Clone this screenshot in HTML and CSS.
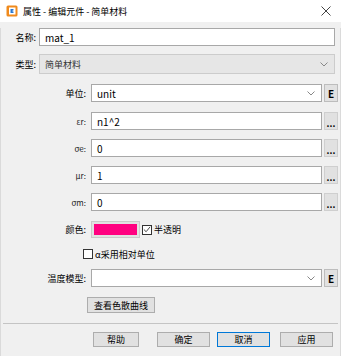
FILE: index.html
```html
<!DOCTYPE html>
<html lang="zh">
<head>
    <meta charset="UTF-8">
    <meta name="viewport" content="width=device-width, initial-scale=1.0">
    <title>属性 - 编辑元件 - 简单材料</title>
    <link rel="stylesheet" href="styles.css">
</head>
<body>
    <div class="window">
        <div class="titlebar">
            <svg class="app-icon" width="12" height="12" viewBox="0 0 12 12">
                <rect x="0.5" y="0.5" width="11" height="11" rx="1.5" fill="#f08a1c"/>
                <rect x="3" y="2.5" width="6.5" height="7" fill="#fff"/>
                <path d="M4.5 4 L7 4 L8 5 L6 6 L8 7 L7 8 L4.5 8 Z" fill="#2a78d0"/>
            </svg>
            <span class="title">属性 - 编辑元件 - 简单材料</span>
            <svg class="close" width="10" height="10" viewBox="0 0 10 10">
                <path d="M0.5 0.5 L9.5 9.5 M9.5 0.5 L0.5 9.5" stroke="#444" stroke-width="1"/>
            </svg>
        </div>

        <div class="body">
            <div class="row row-name">
                <span class="lbl lbl-short">名称:</span>
                <div class="field field-wide">mat_1</div>
            </div>

            <div class="row row-type">
                <span class="lbl lbl-short">类型:</span>
                <div class="field field-wide select disabled">
                    <span>简单材料</span>
                    <svg class="chev" width="8" height="5" viewBox="0 0 8 5"><path d="M0.5 0.5 L4 4 L7.5 0.5" fill="none" stroke="#888"/></svg>
                </div>
            </div>

            <div class="row row-unit">
                <span class="lbl">单位:</span>
                <div class="field select">
                    <span>unit</span>
                    <svg class="chev" width="8" height="5" viewBox="0 0 8 5"><path d="M0.5 0.5 L4 4 L7.5 0.5" fill="none" stroke="#888"/></svg>
                </div>
                <button class="side-btn e-btn">E</button>
            </div>

            <div class="row row-param first">
                <span class="lbl greek">εr:</span>
                <div class="field">n1^2</div>
                <button class="side-btn dots">...</button>
            </div>
            <div class="row row-param">
                <span class="lbl greek">σe:</span>
                <div class="field">0</div>
                <button class="side-btn dots">...</button>
            </div>
            <div class="row row-param">
                <span class="lbl greek">μr:</span>
                <div class="field">1</div>
                <button class="side-btn dots">...</button>
            </div>
            <div class="row row-param">
                <span class="lbl greek">σm:</span>
                <div class="field">0</div>
                <button class="side-btn dots">...</button>
            </div>

            <div class="row row-color">
                <span class="lbl">颜色:</span>
                <button class="swatch"><span class="swatch-fill"></span></button>
                <span class="check checked">
                    <svg width="9" height="9" viewBox="0 0 9 9"><path d="M1 4.5 L3.5 7 L8 1.5" fill="none" stroke="#333" stroke-width="1"/></svg>
                </span>
                <span class="check-text">半透明</span>
            </div>

            <div class="row row-alpha">
                <span class="check"></span>
                <span class="check-text">α采用相对单位</span>
            </div>

            <div class="row row-temp">
                <span class="lbl">温度模型:</span>
                <div class="field select">
                    <span></span>
                    <svg class="chev" width="8" height="5" viewBox="0 0 8 5"><path d="M0.5 0.5 L4 4 L7.5 0.5" fill="none" stroke="#888"/></svg>
                </div>
                <button class="side-btn e-btn">E</button>
            </div>

            <div class="row row-curve">
                <button class="btn curve-btn">查看色散曲线</button>
            </div>

            <div class="separator"></div>

            <div class="row row-actions">
                <button class="btn act help">帮助</button>
                <button class="btn act ok">确定</button>
                <button class="btn act cancel">取消</button>
                <button class="btn act apply">应用</button>
            </div>
        </div>
    </div>
</body>
</html>
```

FILE: styles.css
```css
body {
    margin: 0;
    font-family: "Noto Sans CJK SC", "Noto Sans", sans-serif;
    font-size: 9px;
    color: #000;
    background: #f0f0f0;
}
.window {
    width: 341px;
    height: 356px;
    overflow: hidden;
    background: #f0f0f0;
}
.titlebar {
    height: 22px;
    background: #fff;
    display: flex;
    align-items: center;
}
.app-icon {
    margin-left: 6px;
}
.title {
    margin-left: 5px;
    font-size: 9px;
}
.close {
    margin-left: auto;
    margin-right: 10px;
}
.body {
    height: 334px;
    border-left: 1px solid #dadada;
    border-right: 1px solid #dadada;
    box-sizing: border-box;
}
.row {
    display: flex;
    align-items: center;
}
.lbl {
    width: 85px;
    padding-right: 5px;
    text-align: right;
    flex-shrink: 0;
}
.lbl-short {
    width: 35px;
    padding-right: 3px;
}
.greek {
    font-size: 8px;
    color: #222;
}
.field {
    width: 231px;
    height: 100%;
    box-sizing: border-box;
    background: #fff;
    border: 1px solid #a8a8a8;
    display: flex;
    align-items: center;
    padding-left: 5px;
    font-size: 10px;
}
.field-wide {
    width: 296px;
}
.select {
    justify-content: space-between;
    padding-right: 6px;
}
.disabled {
    background: #e6e6e6;
    border-color: #cccccc;
    color: #333;
    font-size: 9px;
}
.side-btn {
    margin-left: 2px;
    width: 14px;
    height: 100%;
    box-sizing: border-box;
    border: 1px solid #cfcfcf;
    background: #e1e1e1;
    padding: 0;
    font-family: inherit;
    color: #000;
}
.e-btn {
    font-weight: bold;
    font-size: 10px;
    border-color: #bdbdbd;
}
.dots {
    font-size: 9px;
    line-height: 1;
    padding-top: 5px;
    font-weight: bold;
}
.row-name {
    margin-top: 6px;
    height: 18px;
}
.row-type {
    margin-top: 8px;
    height: 20px;
}
.row-unit {
    margin-top: 10px;
    height: 18px;
}
.row-param {
    margin-top: 9px;
    height: 18px;
}
.row-param.first {
    margin-top: 10px;
}
.row-color {
    margin-top: 10px;
    height: 17px;
}
.swatch {
    width: 49px;
    height: 17px;
    box-sizing: border-box;
    padding: 2px;
    border: 1px solid #c9c9c9;
    background: #e1e1e1;
    display: flex;
}
.swatch-fill {
    flex: 1;
    background: #ff0080;
}
.check {
    width: 10px;
    height: 10px;
    box-sizing: border-box;
    border: 1px solid #333;
    background: #fff;
    display: flex;
    align-items: center;
    justify-content: center;
}
.row-color .check {
    margin-left: 2px;
}
.check-text {
    margin-left: 2px;
}
.row-alpha {
    margin-top: 9px;
    height: 14px;
    padding-left: 82px;
}
.row-temp {
    margin-top: 8px;
    height: 18px;
}
.btn {
    box-sizing: border-box;
    border: 1px solid #adadad;
    background: #e1e1e1;
    font-family: inherit;
    font-size: 9px;
    color: #000;
    padding: 0;
}
.row-curve {
    margin-top: 10px;
    height: 16px;
    padding-left: 86px;
}
.curve-btn {
    width: 68px;
    height: 16px;
}
.separator {
    margin: 10px 2px 0 2px;
    border-top: 1px solid #c4c4c4;
}
.row-actions {
    margin-top: 8px;
    height: 15px;
}
.act {
    width: 53px;
    height: 15px;
}
.help {
    margin-left: 92px;
    width: 46px;
}
.ok {
    margin-left: 18px;
}
.cancel {
    margin-left: 7px;
    border-color: #0078d7;
}
.apply {
    margin-left: 10px;
}
```
